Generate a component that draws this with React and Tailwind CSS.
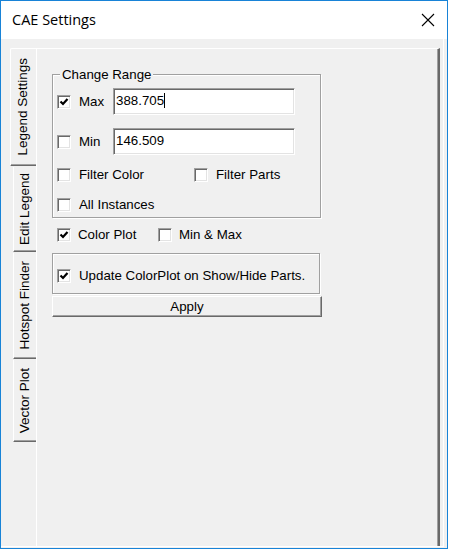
import React from "react";

function Check({ checked }) {
  return (
    <div className="w-[14px] h-[14px] shrink-0 bg-white border border-t-[#a0a0a0] border-l-[#a0a0a0] border-r-white border-b-white shadow-[inset_1px_1px_0_#696969,inset_-1px_-1px_0_#e3e3e3] flex items-center justify-center">
      {checked && (
        <svg width="10" height="10" viewBox="0 0 10 10">
          <path d="M1.5 4.5 L4 7 L8.5 2" fill="none" stroke="#000" strokeWidth="2.2" />
        </svg>
      )}
    </div>
  );
}

function TextBox({ value, caret }) {
  return (
    <div className="w-[182px] h-[27px] bg-white border border-t-[#a0a0a0] border-l-[#a0a0a0] border-r-white border-b-white shadow-[inset_1px_1px_0_#696969,inset_-1px_-1px_0_#e3e3e3] flex items-center pl-[2px] pb-[2px]">
      <span className="text-[13.3px] leading-[15px] text-black">{value}</span>
      {caret && <span className="w-px h-[15px] bg-black" />}
    </div>
  );
}

function VTab({ label, selected, className }) {
  return (
    <div
      className={
        selected
          ? "w-[26px] h-[118px] shrink-0 bg-[#f0f0f0] border-l border-t border-l-white border-t-white border-b border-b-[#696969] shadow-[inset_0_-1px_0_#a0a0a0] rounded-tl-[2px] flex items-center justify-center pr-[2px]"
          : "ml-[3px] mt-[1px] w-[23px] shrink-0 bg-[#f0f0f0] border-l border-l-white border-b border-b-[#696969] shadow-[inset_0_-1px_0_#a0a0a0] flex items-center justify-center " +
            className
      }
    >
      <span className="[writing-mode:vertical-rl] rotate-180 whitespace-nowrap text-[13.5px] leading-none text-black">
        {label}
      </span>
    </div>
  );
}

export default function App() {
  return (
    <div className="w-[450px] h-[550px] bg-white font-['Liberation_Sans',Arial,sans-serif]">
      <div className="w-[448px] h-[549px] border border-[#1883d7] flex flex-col">
        <div className="h-[38px] shrink-0 bg-white flex items-center justify-between pl-[11px] pr-[11px]">
          <span className="font-['Open_Sans',sans-serif] text-[14.5px] text-black">CAE Settings</span>
          <svg width="14" height="14" viewBox="0 0 14 14" className="mr-[1px]">
            <path d="M1 1 L13 13 M13 1 L1 13" stroke="#000" strokeWidth="1.1" fill="none" />
          </svg>
        </div>
        <div className="flex-1 min-h-0 bg-[#f0f0f0] overflow-hidden">
          <div className="w-[443px] h-[508px] border-r border-b border-white pl-[9px] pt-[9px] pr-[3px] flex">
            <div className="w-[26px] shrink-0 flex flex-col">
              <VTab label="Legend Settings" selected />
              <VTab label="Edit Legend" className="h-[85px]" />
              <VTab label="Hotspot Finder" className="h-[106px]" />
              <VTab label="Vector Plot" className="h-[82px]" />
            </div>
            <div className="flex-1 border-l border-t border-white border-r-2 border-r-[#696969] shadow-[inset_-1px_0_0_#a0a0a0] pl-[15px] pt-[25px] text-[13.3px] text-black">
              <div className="relative w-[269px] h-[144px] border border-[#a0a0a0] shadow-[inset_1px_1px_0_#fff,1px_1px_0_#fff] pl-[4px] pt-[13px]">
                <span className="absolute left-[7px] top-[-8px] px-[2px] bg-[#f0f0f0] leading-[15px]">Change Range</span>
                <div className="flex items-center h-[27px]">
                  <Check checked />
                  <span className="ml-[8px] w-[34px]">Max</span>
                  <TextBox value="388.705" caret />
                </div>
                <div className="flex items-center h-[27px] mt-[13px]">
                  <Check />
                  <span className="ml-[8px] w-[34px]">Min</span>
                  <TextBox value="146.509" />
                </div>
                <div className="flex items-center h-[20px] mt-[10px]">
                  <div className="w-[137px] flex items-center">
                    <Check />
                    <span className="ml-[8px]">Filter Color</span>
                  </div>
                  <Check />
                  <span className="ml-[8px]">Filter Parts</span>
                </div>
                <div className="flex items-center h-[20px] mt-[10px]">
                  <Check />
                  <span className="ml-[8px]">All Instances</span>
                </div>
              </div>
              <div className="flex items-center h-[20px] mt-[7px] pl-[5px]">
                <div className="w-[101px] flex items-center">
                  <Check checked />
                  <span className="ml-[7px]">Color Plot</span>
                </div>
                <Check />
                <span className="ml-[7px]">Min &amp; Max</span>
              </div>
              <div className="mt-[8px] w-[268px] h-[41px] border border-[#a0a0a0] shadow-[inset_1px_1px_0_#fff,1px_1px_0_#fff] flex items-center pl-[4px] pt-[4px]">
                <Check checked />
                <span className="ml-[8px]">Update ColorPlot on Show/Hide Parts.</span>
              </div>
              <div className="mt-[2px] w-[270px] h-[21px] bg-[#f0f0f0] border border-t-white border-l-white border-r-[#696969] border-b-[#696969] shadow-[inset_-1px_-1px_0_#a0a0a0] flex items-center justify-center leading-[15px]">
                Apply
              </div>
            </div>
          </div>
        </div>
      </div>
    </div>
  );
}
